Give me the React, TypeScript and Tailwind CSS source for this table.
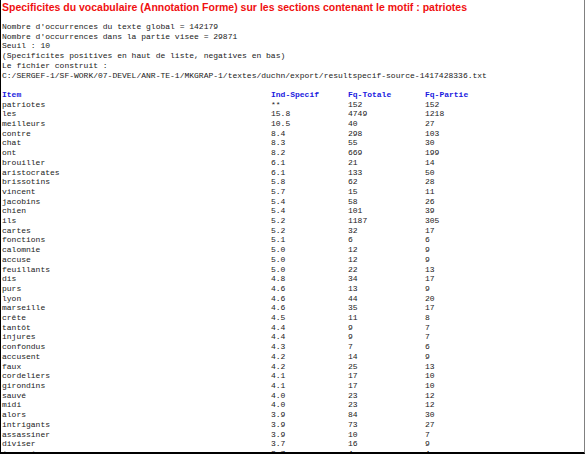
const HEADER = ["Nombre d'occurrences du texte global = 142179", "Nombre d'occurrences dans la partie visee = 29871", "Seuil : 10", "(Specificites positives en haut de liste, negatives en bas)", "Le fichier construit :", "C:/SERGEF-1/SF-WORK/07-DEVEL/ANR-TE-1/MKGRAP-1/textes/duchn/export/resultspecif-source-1417428336.txt"];

const ROWS: [string, string, string, string][] = [
  ["patriotes", "**", "152", "152"],
  ["les", "15.8", "4749", "1218"],
  ["meilleurs", "10.5", "40", "27"],
  ["contre", "8.4", "298", "103"],
  ["chat", "8.3", "55", "30"],
  ["ont", "8.2", "669", "199"],
  ["brouiller", "6.1", "21", "14"],
  ["aristocrates", "6.1", "133", "50"],
  ["brissotins", "5.8", "62", "28"],
  ["vincent", "5.7", "15", "11"],
  ["jacobins", "5.4", "58", "26"],
  ["chien", "5.4", "101", "39"],
  ["ils", "5.2", "1187", "305"],
  ["cartes", "5.2", "32", "17"],
  ["fonctions", "5.1", "6", "6"],
  ["calomnie", "5.0", "12", "9"],
  ["accuse", "5.0", "12", "9"],
  ["feuillants", "5.0", "22", "13"],
  ["dis", "4.8", "34", "17"],
  ["purs", "4.6", "13", "9"],
  ["lyon", "4.6", "44", "20"],
  ["marseille", "4.6", "35", "17"],
  ["crête", "4.5", "11", "8"],
  ["tantôt", "4.4", "9", "7"],
  ["injures", "4.4", "9", "7"],
  ["confondus", "4.3", "7", "6"],
  ["accusent", "4.2", "14", "9"],
  ["faux", "4.2", "25", "13"],
  ["cordeliers", "4.1", "17", "10"],
  ["girondins", "4.1", "17", "10"],
  ["sauvé", "4.0", "23", "12"],
  ["midi", "4.0", "23", "12"],
  ["alors", "3.9", "84", "30"],
  ["intrigants", "3.9", "73", "27"],
  ["assassiner", "3.9", "10", "7"],
  ["diviser", "3.7", "16", "9"],
  ["épargné", "3.7", "4", "4"],
];

function Row({ cells, head }: { cells: string[]; head?: boolean }) {
  return (
    <div className={`flex whitespace-pre ${head ? "font-bold text-[#1a1ae0]" : ""}`}>
      <div className="w-[269px]">{cells[0]}</div>
      <div className="w-[77px]">{cells[1]}</div>
      <div className="w-[77px]">{cells[2]}</div>
      <div>{cells[3]}</div>
    </div>
  );
}

export default function App() {
  return (
    <div className="w-[585px] h-[454px] overflow-hidden bg-white border-l border-black border-r border-r-[#808080] border-b-2 border-b-black pl-px">
      <div className="font-['Liberation_Sans',Arial,sans-serif] font-bold text-[10.5px] leading-[15px] text-[#f01010] mb-[7px] whitespace-nowrap">
        Specificites du vocabulaire (Annotation Forme) sur les sections contenant le motif : patriotes
      </div>
      <div className="font-['Liberation_Mono','Courier_New',monospace] text-[8px] leading-[9.7px] text-[#1a1a1a]">
        {HEADER.map((l) => (
          <div key={l} className="whitespace-pre">{l}</div>
        ))}
        <div className="h-[9.7px]" />
        <Row head cells={["Item", "Ind-Specif", "Fq-Totale", "Fq-Partie"]} />
        {ROWS.map((r) => (
          <Row key={r[0]} cells={r} />
        ))}
      </div>
    </div>
  );
}
